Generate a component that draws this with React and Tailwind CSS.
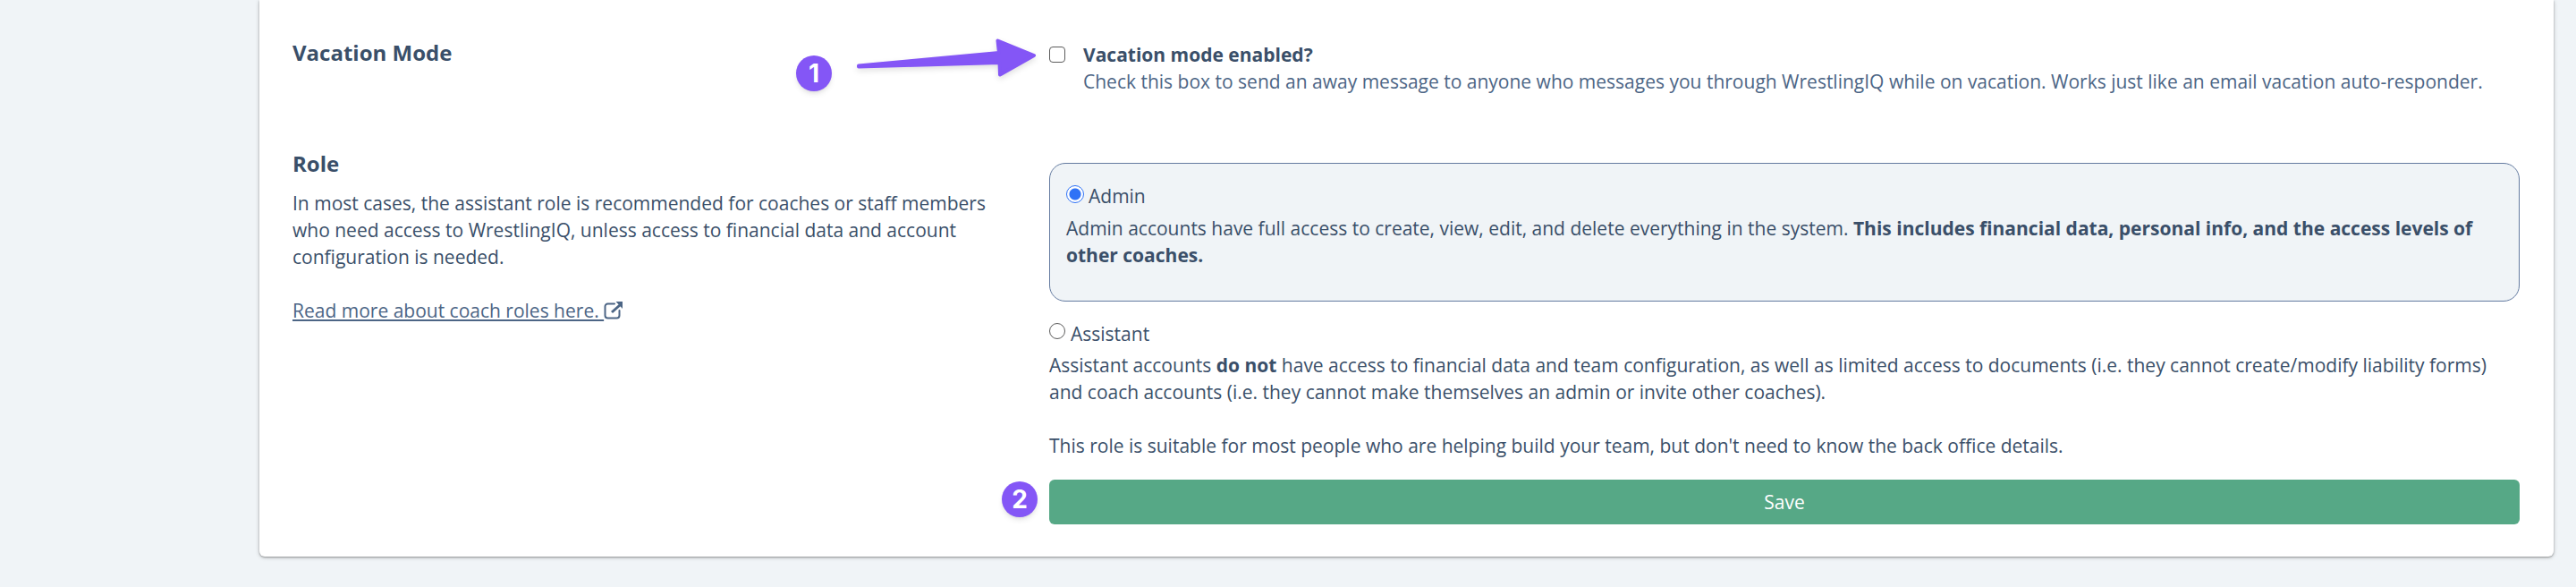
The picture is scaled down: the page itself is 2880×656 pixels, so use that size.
import React from "react";

function Badge({ children, className }) {
  return (
    <span
      aria-hidden="true"
      className={`absolute flex size-10 items-center justify-center rounded-full bg-[#8456f6] font-['Inter'] text-[28px] font-bold leading-none text-white shadow-md ${className}`}
    >
      {children}
    </span>
  );
}

function Arrow() {
  return (
    <svg
      aria-hidden="true"
      viewBox="0 0 220 64"
      className="absolute -left-[223px] -top-2 h-16 w-[220px] drop-shadow-md"
      fill="#8456f6"
      stroke="#8456f6"
      strokeLinejoin="round"
      strokeWidth="4"
    >
      <path d="M10 37.5 L167 23 L165.5 9.500 L206 26 L168 47.500 L167.500 34 L10 38.500 Z" />
    </svg>
  );
}

function ExternalLinkIcon() {
  return (
    <svg aria-hidden="true" viewBox="0 0 22 20" className="h-5 w-[22px]" fill="none" stroke="currentColor">
      <path d="M12 2.5H4.5A3 3 0 0 0 1.5 5.5V15.5A3 3 0 0 0 4.5 18.5H14.5A3 3 0 0 0 17.5 15.5V10" strokeWidth="2" strokeLinecap="round" />
      <path d="M9 12L18 4" strokeWidth="3" />
      <path d="M13.5 0H21V8Z" fill="currentColor" stroke="none" />
    </svg>
  );
}

export default function App() {
  return (
    <div className="bg-[#f0f4f7] pb-[34px] pl-[290px] pr-[25px] font-['Open_Sans',sans-serif] text-[21px] leading-[30px] text-[#3a4f69]">
      <form
        onSubmit={(e) => e.preventDefault()}
        className="rounded-b-md bg-white pb-9 pl-[37px] pr-[38px] pt-11 shadow-[0_1px_5px_rgba(0,0,0,0.2),0_1px_2px_rgba(0,0,0,0.3)]"
      >
        <section className="grid grid-cols-[801fr_1644fr] gap-x-[45px]">
          <h2 className="text-2xl font-bold leading-[30px]">Vacation Mode</h2>
          <div className="relative flex gap-5 pt-[2px]">
            <Badge className="-left-[283px] top-[18px]">1</Badge>
            <Arrow />
            <input
              id="vacation"
              type="checkbox"
              aria-describedby="vacation-help"
              className="mt-[6px] size-[18px] shrink-0 appearance-none rounded-[4px] border border-[#5c5c5c] bg-white checked:bg-[#2f72f6]"
            />
            <div>
              <label htmlFor="vacation" className="block font-bold">
                Vacation mode enabled?
              </label>
              <p id="vacation-help" className="text-[#4c6585]">
                Check this box to send an away message to anyone who messages you through WrestlingIQ while on vacation.
                Works just like an email vacation auto-responder.
              </p>
            </div>
          </div>
        </section>

        <section className="mt-[62px] grid grid-cols-[801fr_1644fr] gap-x-[45px]">
          <div>
            <h2 className="text-2xl font-bold leading-[30px]">Role</h2>
            <p className="mt-[14px]">
              In most cases, the assistant role is recommended for coaches or staff members who need access to
              WrestlingIQ, unless access to financial data and account configuration is needed.
            </p>
            <a href="#roles" className="mt-[30px] inline-flex items-center text-[#4c6585]">
              <span className="whitespace-pre underline decoration-2 underline-offset-2">Read more about coach roles here. </span>
              <ExternalLinkIcon />
            </a>
          </div>

          <div className="pt-[14px]">
            <div className="rounded-[18px] border border-[#647ba0] bg-[#f0f4f7] px-[18px] pb-9 pt-[21px]">
              <div className="flex gap-[5px]">
                <input
                  id="admin"
                  type="radio"
                  name="role"
                  defaultChecked
                  className="mt-[3px] size-5 shrink-0 appearance-none rounded-full border border-[#5c5c5c] bg-white checked:border-[#2f72f6] checked:bg-[radial-gradient(circle,#2f72f6_6px,#ffffff_7px)]"
                />
                <label htmlFor="admin">Admin</label>
              </div>
              <p className="mt-[6px]">
                Admin accounts have full access to create, view, edit, and delete everything in the system.{" "}
                <strong>This includes financial data, personal info, and the access levels of other coaches.</strong>
              </p>
            </div>

            <div className="mt-[21px] flex gap-[6px]">
              <input
                id="assistant"
                type="radio"
                name="role"
                className="mt-[3px] size-[18px] shrink-0 appearance-none rounded-full border border-[#5c5c5c] bg-white checked:border-[#2f72f6] checked:bg-[radial-gradient(circle,#2f72f6_5px,#ffffff_6px)]"
              />
              <label htmlFor="assistant">Assistant</label>
            </div>
            <p className="mt-[5px]">
              Assistant accounts <strong>do not</strong> have access to financial data and team configuration, as well
              as limited access to documents (i.e. they cannot create/modify liability forms) and coach accounts (i.e.
              they cannot make themselves an admin or invite other coaches).
            </p>
            <p className="mt-[30px]">
              This role is suitable for most people who are helping build your team, but don't need to know the back
              office details.
            </p>
            <div className="relative mt-[23px]">
              <Badge className="-left-[53px] top-[2px]">2</Badge>
              <button type="submit" className="block h-[50px] w-full rounded-md bg-[#56a886] text-white">
                Save
              </button>
            </div>
          </div>
        </section>
      </form>
    </div>
  );
}
